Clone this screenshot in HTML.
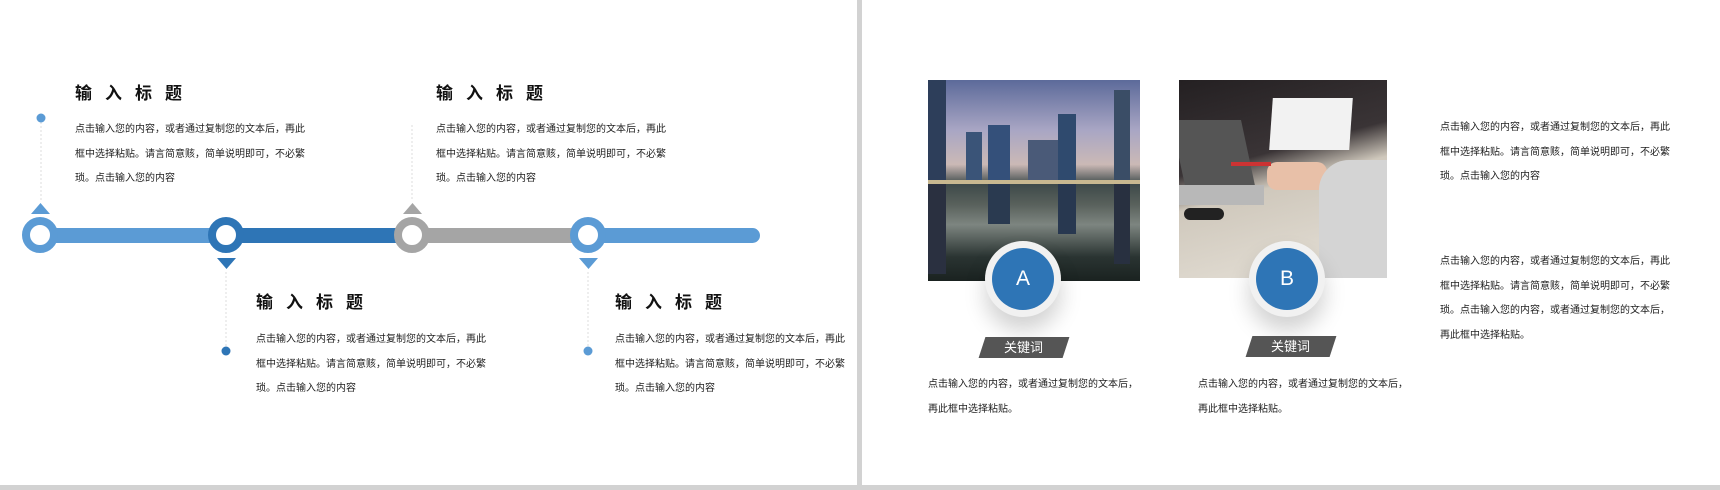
<!DOCTYPE html>
<html><head><meta charset="utf-8"><style>
body{margin:0;width:1720px;height:490px;position:relative;overflow:hidden;background:#fff;font-family:"Liberation Sans","Noto Sans CJK SC",sans-serif;}
.a{position:absolute}
.t{position:absolute;font-size:17px;font-weight:bold;color:#111;letter-spacing:13px;white-space:nowrap}
.b{position:absolute;font-size:10px;color:#222;line-height:24.5px;white-space:nowrap}
.ring{position:absolute;width:20px;height:20px;border-radius:50%;border:8px solid;background:#fff}
.tag{position:absolute;width:84px;height:21px;background:#555;transform:skewX(-18deg);color:#fff;font-size:13px;text-align:center;line-height:21px}
.tag span{display:inline-block;transform:skewX(18deg)}
.badge{position:absolute;width:76px;height:76px;border-radius:50%;background:#f1f1f1;box-shadow:0 14px 22px rgba(0,0,0,.18)}
.badge div{position:absolute;left:7px;top:7px;width:62px;height:62px;border-radius:50%;background:#2e75b6;color:#fff;font-size:21px;text-align:center;line-height:62px}
</style></head><body>
<div class="a" style="left:857px;top:0;width:5px;height:490px;background:#d2d2d2"></div>
<div class="a" style="left:0;top:485px;width:1720px;height:5px;background:#d2d2d2"></div>

<div class="a" style="left:40px;top:228px;width:186px;height:15px;background:#5b9bd5"></div>
<div class="a" style="left:226px;top:228px;width:186px;height:15px;background:#2e75b6"></div>
<div class="a" style="left:412px;top:228px;width:176px;height:15px;background:#a5a5a5"></div>
<div class="a" style="left:588px;top:228px;width:172px;height:15px;background:#5b9bd5;border-radius:0 8px 8px 0"></div>
<div class="ring" style="left:22px;top:217px;border-color:#5b9bd5"></div>
<div class="ring" style="left:208px;top:217px;border-color:#2e75b6"></div>
<div class="ring" style="left:394px;top:217px;border-color:#a5a5a5"></div>
<div class="ring" style="left:570px;top:217px;border-color:#5b9bd5"></div>
<svg class="a" style="left:0;top:0" width="857" height="485">
<polygon points="31,214 50,214 40.5,203" fill="#5b9bd5"/>
<polygon points="217,258 236,258 226.5,269" fill="#2e75b6"/>
<polygon points="403,214 422,214 412.5,203" fill="#a5a5a5"/>
<polygon points="579,258 598,258 588.5,269" fill="#5b9bd5"/>
<line x1="41" y1="122" x2="41" y2="200" stroke="#ddd" stroke-dasharray="2,2"/>
<line x1="226" y1="272" x2="226" y2="348" stroke="#ddd" stroke-dasharray="2,2"/>
<line x1="412" y1="125" x2="412" y2="200" stroke="#ddd" stroke-dasharray="2,2"/>
<line x1="588" y1="272" x2="588" y2="348" stroke="#ddd" stroke-dasharray="2,2"/>
<circle cx="41" cy="118" r="4.5" fill="#5b9bd5"/>
<circle cx="226" cy="351" r="4.5" fill="#2e75b6"/>
<circle cx="588" cy="351" r="4.5" fill="#5b9bd5"/>
</svg>
<div class="t" style="left:75px;top:79px">输入标题</div>
<div class="b" style="left:75px;top:118px">点击输入您的内容，或者通过复制您的文本后，再此<br>框中选择粘贴。请言简意赅，简单说明即可，不必繁<br>琐。点击输入您的内容</div>
<div class="t" style="left:436px;top:79px">输入标题</div>
<div class="b" style="left:436px;top:118px">点击输入您的内容，或者通过复制您的文本后，再此<br>框中选择粘贴。请言简意赅，简单说明即可，不必繁<br>琐。点击输入您的内容</div>
<div class="t" style="left:256px;top:288px">输入标题</div>
<div class="b" style="left:256px;top:328px">点击输入您的内容，或者通过复制您的文本后，再此<br>框中选择粘贴。请言简意赅，简单说明即可，不必繁<br>琐。点击输入您的内容</div>
<div class="t" style="left:615px;top:288px">输入标题</div>
<div class="b" style="left:615px;top:328px">点击输入您的内容，或者通过复制您的文本后，再此<br>框中选择粘贴。请言简意赅，简单说明即可，不必繁<br>琐。点击输入您的内容</div>

<div class="a" style="left:928px;top:80px;width:212px;height:201px;overflow:hidden;background:linear-gradient(180deg,#5c6a9a 0%,#a9a6c4 25%,#cbb9b6 42%,#3e4a4a 52%,#59615c 62%,#7d8580 72%,#2a3432 88%,#1a2220 100%)">
<div class="a" style="left:0;top:0;width:18px;height:100px;background:#2d3e5a"></div>
<div class="a" style="left:38px;top:52px;width:16px;height:48px;background:#3a5478"></div>
<div class="a" style="left:60px;top:45px;width:22px;height:55px;background:#34507a"></div>
<div class="a" style="left:100px;top:60px;width:40px;height:40px;background:#4a5a78"></div>
<div class="a" style="left:130px;top:34px;width:18px;height:66px;background:#2f4a6e"></div>
<div class="a" style="left:186px;top:10px;width:16px;height:90px;background:#3a4d66"></div>
<div class="a" style="left:0;top:100px;width:212px;height:4px;background:#c8b890"></div>
<div class="a" style="left:0;top:104px;width:18px;height:90px;background:#2a3040"></div>
<div class="a" style="left:60px;top:104px;width:22px;height:40px;background:#2a3a50"></div>
<div class="a" style="left:130px;top:104px;width:18px;height:50px;background:#283850"></div>
<div class="a" style="left:186px;top:104px;width:16px;height:80px;background:#283040"></div>
</div>
<div class="a" style="left:1179px;top:80px;width:208px;height:198px;overflow:hidden;background:linear-gradient(165deg,#242022 0%,#3a3436 38%,#cfc8bc 52%,#e7e2d9 100%)">
<div class="a" style="left:92px;top:18px;width:80px;height:52px;background:#f2f2f2;transform:skewX(-4deg)"></div>
<div class="a" style="left:0;top:40px;width:70px;height:75px;background:#555;transform:skewX(12deg)"></div>
<div class="a" style="left:0;top:105px;width:85px;height:20px;background:#b8b8b8"></div>
<div class="a" style="left:5px;top:128px;width:40px;height:12px;border-radius:6px;background:#222"></div>
<div class="a" style="left:88px;top:82px;width:60px;height:28px;border-radius:10px;background:#e8c0a8"></div>
<div class="a" style="left:140px;top:80px;width:68px;height:118px;background:#d4d4d4;border-radius:30px 0 0 0"></div>
<div class="a" style="left:52px;top:82px;width:40px;height:4px;background:#c33"></div>
</div>
<div class="badge" style="left:985px;top:241px"><div>A</div></div>
<div class="badge" style="left:1249px;top:241px"><div>B</div></div>
<div class="tag" style="left:982px;top:337px"><span>关键词</span></div>
<div class="tag" style="left:1249px;top:336px"><span>关键词</span></div>
<div class="b" style="left:928px;top:373px">点击输入您的内容，或者通过复制您的文本后，<br>再此框中选择粘贴。</div>
<div class="b" style="left:1198px;top:373px">点击输入您的内容，或者通过复制您的文本后，<br>再此框中选择粘贴。</div>
<div class="b" style="left:1440px;top:116px">点击输入您的内容，或者通过复制您的文本后，再此<br>框中选择粘贴。请言简意赅，简单说明即可，不必繁<br>琐。点击输入您的内容</div>
<div class="b" style="left:1440px;top:250px">点击输入您的内容，或者通过复制您的文本后，再此<br>框中选择粘贴。请言简意赅，简单说明即可，不必繁<br>琐。点击输入您的内容，或者通过复制您的文本后，<br>再此框中选择粘贴。</div>
</body></html>
